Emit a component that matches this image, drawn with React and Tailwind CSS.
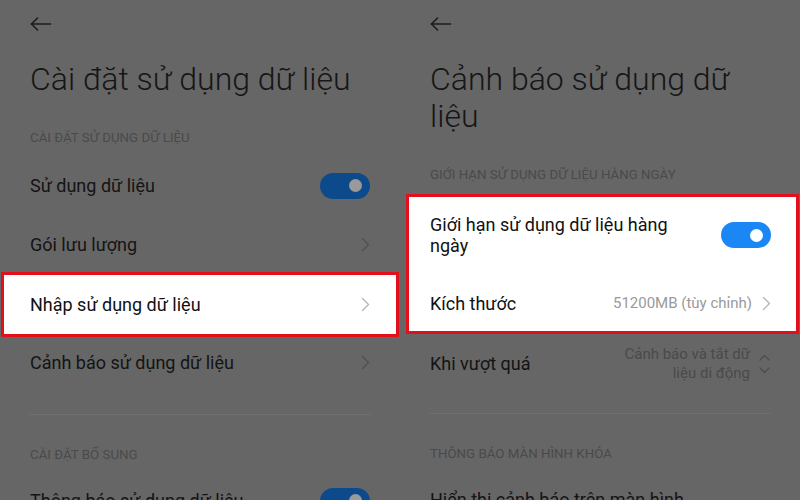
import React from "react";

const BackArrow = () => (
    <svg width="22" height="14" viewBox="0 0 22 14" fill="none" stroke="#1c1c1c" strokeWidth="1.6" strokeLinecap="round" strokeLinejoin="round">
        <path d="M1.5 7H20.5" />
        <path d="M7.5 1L1.5 7L7.5 13" />
    </svg>
);

const Chevron = ({ color }) => (
    <svg width="9" height="15" viewBox="0 0 9 15" fill="none" stroke={color} strokeWidth="1.3" strokeLinecap="round" strokeLinejoin="round">
        <path d="M1.5 1.5L7.5 7.5L1.5 13.5" />
    </svg>
);

const UpDown = () => (
    <svg width="11" height="22" viewBox="0 0 11 22" fill="none" stroke="#4d4d4d" strokeWidth="1.3" strokeLinecap="round" strokeLinejoin="round">
        <path d="M1 7L5.5 2.5L10 7" />
        <path d="M1 15L5.5 19.5L10 15" />
    </svg>
);

const Toggle = ({ dim }) => (
    <div className={`flex h-[26px] w-[50px] shrink-0 items-center justify-end rounded-full pr-[8px] ${dim ? "bg-[#0d4a8c]" : "bg-[#1b87f4]"}`}>
        <div className={`h-[13px] w-[13px] rounded-full ${dim ? "bg-[#9a9a9a]" : "bg-white"}`} />
    </div>
);

const SectionHeader = ({ children, className = "" }) => (
    <div className={`shrink-0 text-[13.3px] leading-[16px] text-[#4a4a4a] ${className}`}>{children}</div>
);

const Row = ({ label, right, className = "" }) => (
    <div className={`flex h-[59px] shrink-0 items-center justify-between ${className}`}>
        <span className="text-[18px] text-[#141414]">{label}</span>
        {right}
    </div>
);

const Divider = () => <div className="mt-[22px] h-px shrink-0 bg-[#707070]" />;

const LeftPanel = () => (
    <div className="flex w-[400px] flex-col px-[30px] pt-[14px]">
        <div className="flex h-[20px] shrink-0 items-center"><BackArrow /></div>
        <h1 className="mt-[27px] shrink-0 text-[32px] font-light leading-[37px] text-[#161616]">Cài đặt sử dụng dữ liệu</h1>
        <SectionHeader className="mt-[32px]">CÀI ĐẶT SỬ DỤNG DỮ LIỆU</SectionHeader>
        <Row className="mt-[10px]" label="Sử dụng dữ liệu" right={<Toggle dim />} />
        <Row label="Gói lưu lượng" right={<Chevron color="#505050" />} />
        <div className="-mx-[29px] -mb-[4px] -mt-[2px] flex h-[65px] shrink-0 items-center justify-between border-[3px] border-[#e3101c] bg-white px-[26px]">
            <span className="text-[18px] text-[#111]">Nhập sử dụng dữ liệu</span>
            <Chevron color="#b3b3b3" />
        </div>
        <Row label="Cảnh báo sử dụng dữ liệu" right={<Chevron color="#505050" />} />
        <Divider />
        <SectionHeader className="mt-[32px]">CÀI ĐẶT BỔ SUNG</SectionHeader>
        <Row className="mt-[8px]" label="Thông báo sử dụng dữ liệu" right={<Toggle dim />} />
    </div>
);

const RightPanel = () => (
    <div className="flex w-[400px] flex-col px-[30px] pt-[14px]">
        <div className="flex h-[20px] shrink-0 items-center"><BackArrow /></div>
        <h1 className="mt-[27px] shrink-0 text-[32px] font-light leading-[37px] text-[#161616]">
            Cảnh báo sử dụng dữ<br />liệu
        </h1>
        <SectionHeader className="mt-[32px]">GIỚI HẠN SỬ DỤNG DỮ LIỆU HÀNG NGÀY</SectionHeader>
        <div className="-ml-[24px] -mr-[29px] mt-[11px] flex shrink-0 flex-col border-[3px] border-[#e3101c] bg-white pl-[21px] pr-[25px]">
            <div className="flex h-[76px] items-center justify-between">
                <span className="text-[18px] leading-[21px] text-[#111]">Giới hạn sử dụng dữ liệu hàng<br />ngày</span>
                <Toggle />
            </div>
            <div className="flex h-[58px] items-center justify-between pt-[3px]">
                <span className="text-[18px] text-[#111]">Kích thước</span>
                <div className="flex items-center gap-[10px]">
                    <span className="text-[15px] text-[#9a9a9a]">51200MB (tùy chỉnh)</span>
                    <Chevron color="#b3b3b3" />
                </div>
            </div>
        </div>
        <div className="flex h-[57px] shrink-0 items-center justify-between pt-[2px]">
            <span className="text-[18px] text-[#141414]">Khi vượt quá</span>
            <div className="flex items-center gap-[9px]">
                <span className="text-right text-[15px] leading-[19px] text-[#4a4a4a]">Cảnh báo và tắt dữ<br />liệu di động</span>
                <UpDown />
            </div>
        </div>
        <Divider />
        <SectionHeader className="mt-[32px]">THÔNG BÁO MÀN HÌNH KHÓA</SectionHeader>
        <Row className="mt-[8px]" label="Hiển thị cảnh báo trên màn hình" right={null} />
    </div>
);

export default function App() {
    return (
        <div className="flex h-[500px] w-[800px] items-start overflow-hidden bg-[#666666] font-['Roboto',sans-serif]">
            <LeftPanel />
            <RightPanel />
        </div>
    );
}
